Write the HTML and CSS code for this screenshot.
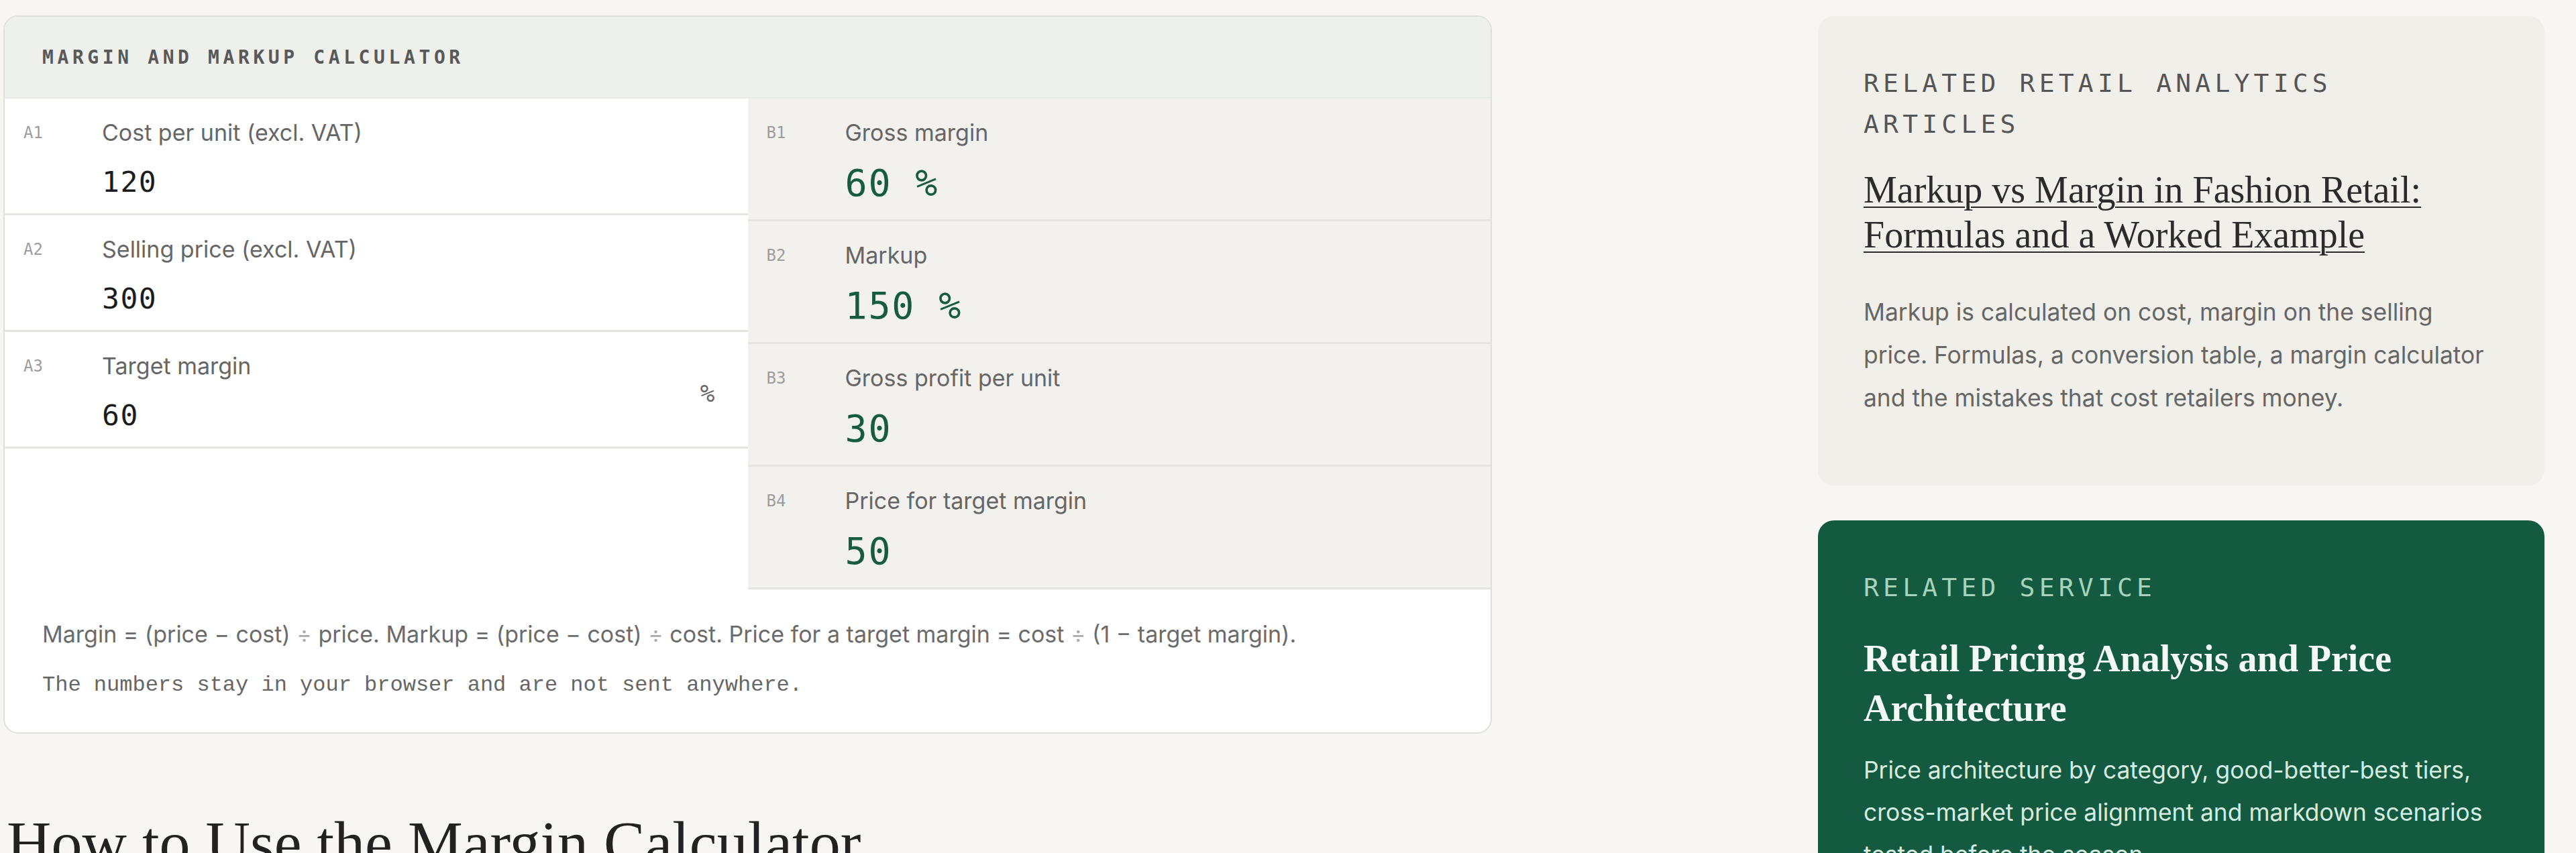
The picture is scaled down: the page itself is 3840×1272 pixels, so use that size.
FILE: index.html
```html
<!DOCTYPE html>
<html lang="en">
<head>
<meta charset="utf-8">
<title>Margin and Markup Calculator</title>
<link rel="stylesheet" href="styles.css">
</head>
<body>
<div class="page">
  <main class="main">
    <section class="calc">
      <header class="calc-head">MARGIN AND MARKUP CALCULATOR</header>
      <div class="calc-grid">
        <div class="col inputs">
          <div class="cell">
            <span class="cid">A1</span>
            <div class="cbody"><div class="clabel">Cost per unit (excl. VAT)</div><div class="cval">120</div></div>
          </div>
          <div class="cell">
            <span class="cid">A2</span>
            <div class="cbody"><div class="clabel">Selling price (excl. VAT)</div><div class="cval">300</div></div>
          </div>
          <div class="cell">
            <span class="cid">A3</span>
            <div class="cbody"><div class="clabel">Target margin</div><div class="cval">60</div></div>
            <span class="cunit">%</span>
          </div>
        </div>
        <div class="col outputs">
          <div class="cell">
            <span class="cid">B1</span>
            <div class="cbody"><div class="clabel">Gross margin</div><div class="cval">60 %</div></div>
          </div>
          <div class="cell">
            <span class="cid">B2</span>
            <div class="cbody"><div class="clabel">Markup</div><div class="cval">150 %</div></div>
          </div>
          <div class="cell">
            <span class="cid">B3</span>
            <div class="cbody"><div class="clabel">Gross profit per unit</div><div class="cval">30</div></div>
          </div>
          <div class="cell">
            <span class="cid">B4</span>
            <div class="cbody"><div class="clabel">Price for target margin</div><div class="cval">50</div></div>
          </div>
        </div>
      </div>
      <footer class="calc-foot">
        <p class="formula">Margin = (price − cost) <span class="op">÷</span> price. Markup = (price − cost) <span class="op">÷</span> cost. Price for a target margin = cost <span class="op">÷</span> (1 − target margin).</p>
        <p class="note">The numbers stay in your browser and are not sent anywhere.</p>
      </footer>
    </section>
    <h2 class="howto">How to Use the Margin Calculator</h2>
  </main>
  <aside class="side">
    <section class="card card-muted">
      <p class="eyebrow">RELATED RETAIL ANALYTICS ARTICLES</p>
      <h3 class="card-title"><a href="#">Markup vs Margin in Fashion Retail: Formulas and a Worked Example</a></h3>
      <p class="card-desc">Markup is calculated on cost, margin on the selling price. Formulas, a conversion table, a margin calculator and the mistakes that cost retailers money.</p>
    </section>
    <section class="card card-green">
      <p class="eyebrow">RELATED SERVICE</p>
      <h3 class="card-title">Retail Pricing Analysis and Price Architecture</h3>
      <p class="card-desc">Price architecture by category, good-better-best tiers, cross-market price alignment and markdown scenarios tested before the season.</p>
    </section>
  </aside>
</div>
</body>
</html>
```
FILE: styles.css
```css
* { box-sizing: border-box; margin: 0; padding: 0; }
html, body { background: #f7f6f2; }
body {
  font-family: Inter, "Noto Sans", sans-serif;
  color: #222;
  height: 1272px;
  overflow: hidden;
}
.page {
  display: grid;
  grid-template-columns: 2219px 1083px;
  column-gap: 486px;
  padding: 23px 0 0 5px;
  align-items: start;
}

/* calculator */
.calc {
  background: #fff;
  border: 2px solid #e0dfd9;
  border-radius: 22px;
  overflow: hidden;
}
.calc-head {
  background: #eef0ec;
  padding: 43px 56px 41px;
  font-family: "DejaVu Sans Mono", monospace;
  font-weight: bold;
  font-size: 28px;
  line-height: 36px;
  letter-spacing: 5.6px;
  color: #595959;
  border-bottom: 2px solid #e7e9e4;
}
.calc-grid {
  display: grid;
  grid-template-columns: 1fr 1fr;
}
.outputs { background: #f2f1ed; }
.cell {
  display: grid;
  grid-template-columns: 117px 1fr auto;
  padding: 31px 49px 20px 28px;
  border-bottom: 3px solid #e6e5e0;
}
.outputs .cell { padding-bottom: 22px; }
.cid {
  font-family: "DejaVu Sans Mono", monospace;
  font-size: 24px;
  line-height: 40px;
  color: #9d9d9d;
}
.clabel {
  font-size: 34px;
  line-height: 40px;
  color: #666;
}
.cval {
  font-family: "DejaVu Sans Mono", monospace;
  font-size: 43px;
  line-height: 54px;
  letter-spacing: 1.5px;
  color: #1d1d1d;
  margin-top: 26px;
}
.outputs .cval {
  font-size: 55px;
  line-height: 64px;
  letter-spacing: 1.8px;
  color: #175c40;
  margin-top: 23px;
}
.cunit {
  align-self: center;
  font-family: "DejaVu Sans Mono", monospace;
  font-size: 36px;
  color: #666;
}
.calc-foot { padding: 44px 56px 50px; }
.formula {
  font-size: 34px;
  line-height: 46px;
  color: #6b6b6b;
}
.op { color: #aaa; }
.note {
  font-family: "Liberation Mono", monospace;
  font-size: 32px;
  line-height: 40px;
  color: #666;
  margin-top: 33px;
}
.howto {
  font-family: "Liberation Serif", serif;
  font-weight: normal;
  font-size: 92px;
  line-height: 104px;
  color: #222;
  margin: 111px 0 0 5px;
}

/* sidebar */
.side {
  display: flex;
  flex-direction: column;
  gap: 52px;
  padding-top: 1px;
}
.card {
  border-radius: 24px;
  padding: 70px 76px 98px 68px;
}
.card-muted { background: #f0efea; }
.card-green { background: #145a41; padding-bottom: 70px; }
.eyebrow {
  font-family: "DejaVu Sans Mono", monospace;
  font-size: 38px;
  line-height: 61px;
  letter-spacing: 6.2px;
  color: #555;
}
.card-green .eyebrow { color: #a6d3bb; }
.card-title {
  font-family: "Liberation Serif", serif;
  font-weight: normal;
  font-size: 56px;
  line-height: 67px;
  margin-top: 34px;
}
.card-title a {
  color: #2b2b2b;
  text-decoration: underline;
  text-decoration-thickness: 2px;
  text-underline-offset: 6px;
}
.card-desc {
  font-size: 35.4px;
  line-height: 64px;
  color: #666;
  margin-top: 50px;
}
.card-green .card-title {
  font-weight: bold;
  color: #f3faf5;
  line-height: 74px;
  margin-top: 38px;
}
.card-green .card-desc {
  color: #d5ede0;
  line-height: 63px;
  margin-top: 24px;
}
```
